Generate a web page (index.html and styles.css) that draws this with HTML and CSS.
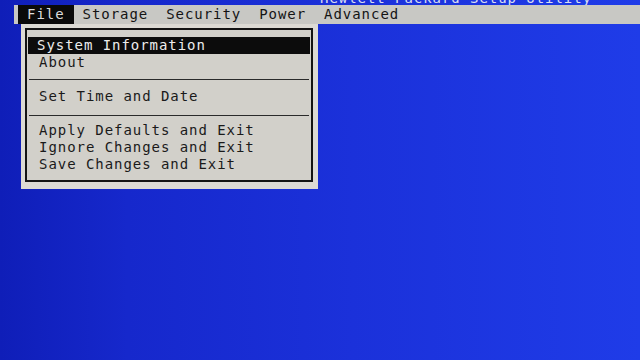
FILE: index.html
```html
<!DOCTYPE html>
<html>
<head>
<meta charset="utf-8">
<link rel="stylesheet" href="styles.css">
</head>
<body>
<div class="screen">
  <div class="title"><span>Hewlett-Packard Setup Utility</span></div>
  <div class="menubar">
    <span class="mitem active">File</span>
    <span class="mitem">Storage</span>
    <span class="mitem">Security</span>
    <span class="mitem">Power</span>
    <span class="mitem">Advanced</span>
  </div>
  <div class="dropdown">
    <div class="frame">
      <div class="group g1">
        <div class="row selected">System Information</div>
        <div class="row">About</div>
      </div>
      <div class="divider"></div>
      <div class="group g2">
        <div class="row">Set Time and Date</div>
      </div>
      <div class="divider"></div>
      <div class="group g3">
        <div class="row">Apply Defaults and Exit</div>
        <div class="row">Ignore Changes and Exit</div>
        <div class="row">Save Changes and Exit</div>
      </div>
    </div>
  </div>
</div>
</body>
</html>
```
FILE: styles.css
```css
html, body {
  margin: 0;
  padding: 0;
  width: 640px;
  height: 360px;
  overflow: hidden;
}
body {
  background: linear-gradient(90deg, #0f1eb8 0%, #1628cc 20%, #1b31da 55%, #1f3ce8 100%);
  font-family: "DejaVu Sans Mono", "Liberation Mono", monospace;
  font-size: 14px;
  letter-spacing: 0.95px;
  color: #1a1a1a;
}
.screen {
  display: flex;
  flex-direction: column;
  align-items: flex-start;
}
.title {
  height: 5px;
  width: 100%;
  padding-left: 320px;
  box-sizing: border-box;
  overflow: visible;
}
.title span {
  display: block;
  margin-top: -8px;
  line-height: 12px;
  color: #d9ddf2;
  white-space: nowrap;
}
.menubar {
  display: flex;
  align-self: stretch;
  margin-left: 14px;
  padding-left: 4px;
  height: 19px;
  background: #c8c8c4;
  align-items: stretch;
}
.mitem {
  padding: 0 9px;
  line-height: 19px;
  color: #141414;
}
.mitem.active {
  background: #0a0a0a;
  color: #dcdcdc;
}
.dropdown {
  margin-left: 21px;
  width: 297px;
  box-sizing: border-box;
  padding: 4px 5px 7px 4px;
  background: #dcdad4;
}
.frame {
  border: 2px solid #141414;
  background: #d2d0ca;
  display: flex;
  flex-direction: column;
}
.group {
  display: flex;
  flex-direction: column;
}
.g1 { padding: 7px 0 8px; }
.g2 { padding: 8px 0 10px; }
.g3 { padding: 6px 0 7px; }
.row {
  height: 17px;
  line-height: 17px;
  padding-left: 11px;
  margin: 0 1px;
  white-space: nowrap;
}
.row.selected {
  background: #0c0c0c;
  color: #ececec;
  padding-left: 9px;
}
.divider {
  height: 1px;
  margin: 0 2px;
  background: #2a2a2a;
}
```
